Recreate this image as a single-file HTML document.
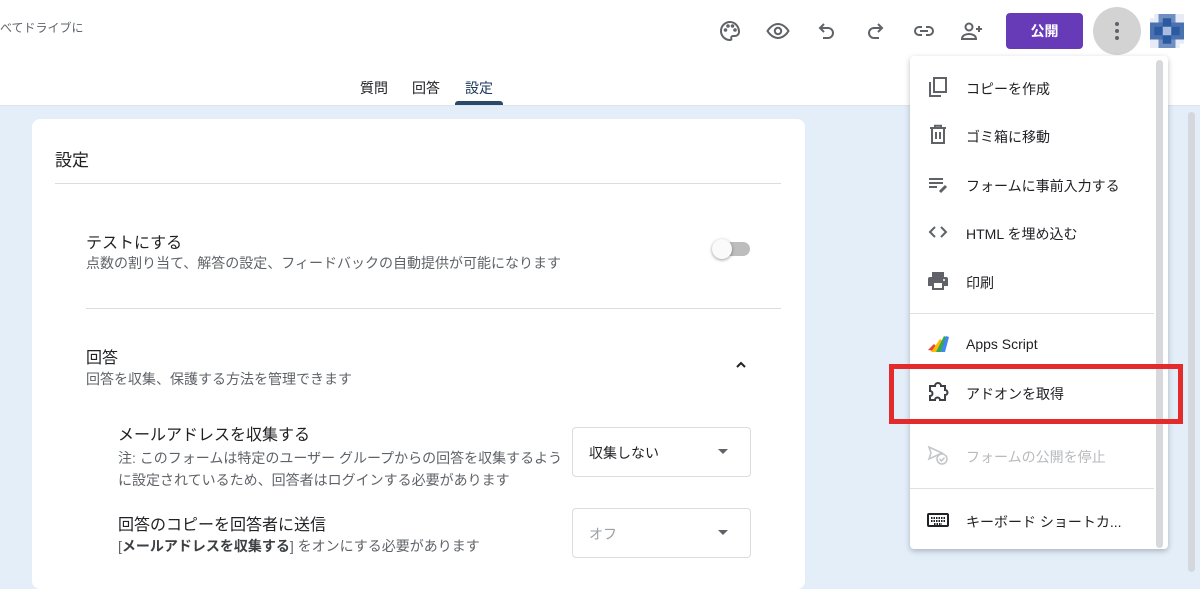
<!DOCTYPE html>
<html><head><meta charset="utf-8"><style>
*{margin:0;padding:0;box-sizing:border-box}
body{width:1200px;height:569px;overflow:hidden;background:#e3eef9;font-family:"Liberation Sans","Noto Sans CJK JP",sans-serif;position:relative;color:#202124}
.hdr{position:absolute;left:0;top:0;width:1200px;height:106px;background:#fff;border-bottom:1px solid #dde4ec}
.abs{position:absolute}
.ic{position:absolute;width:24px;height:24px}
.tab{position:absolute;top:78px;font-size:14px;color:#202124}
.card{position:absolute;left:32px;top:119px;width:773px;height:470px;background:#fff;border-radius:8px}
.t{position:absolute;white-space:nowrap}
.menu{position:absolute;left:910px;top:56px;width:258px;height:493px;background:#fff;border-radius:4px;box-shadow:0 2px 6px rgba(0,0,0,.25)}
.mi{position:absolute;left:56px;font-size:14px;color:#202124;white-space:nowrap}
.sel{position:absolute;width:179px;height:50px;border:1px solid #dadce0;border-radius:4px;background:#fff}
.arr{position:absolute;left:145px;top:21px;width:0;height:0;border-left:5px solid transparent;border-right:5px solid transparent;border-top:5px solid #5f6368}
</style></head><body>
<div class="hdr"></div>
<div class="t" style="left:0;top:19px;font-size:12px;color:#5f6368">べてドライブに</div>
<svg class="ic" style="left:718px;top:19px" viewBox="0 0 24 24" fill="none" stroke="#5f6368" stroke-width="2"><path d="M12 3a9 9 0 1 0 0 18c1.2 0 1.6-.8 1.3-1.6-.4-1 .2-2.4 1.6-2.4H17a4 4 0 0 0 4-4c0-5.5-4-10-9-10z"/><circle cx="7.5" cy="11" r=".8" fill="#5f6368"/><circle cx="10" cy="7" r=".8" fill="#5f6368"/><circle cx="14.5" cy="7" r=".8" fill="#5f6368"/><circle cx="17" cy="11" r=".8" fill="#5f6368"/></svg>
<svg class="ic" style="left:766px;top:19px" viewBox="0 0 24 24" fill="none" stroke="#5f6368" stroke-width="2"><path d="M1.5 12S5.5 5 12 5s10.5 7 10.5 7-4 7-10.5 7S1.5 12 1.5 12z"/><circle cx="12" cy="12" r="3.2"/></svg>
<svg class="ic" style="left:815px;top:19px" viewBox="0 0 24 24" fill="none" stroke="#5f6368" stroke-width="2"><path d="M9 5L5 9l4 4"/><path d="M5 9h8a5 5 0 0 1 0 10H8"/></svg>
<svg class="ic" style="left:863px;top:19px" viewBox="0 0 24 24" fill="none" stroke="#5f6368" stroke-width="2"><path d="M15 5l4 4-4 4"/><path d="M19 9h-8a5 5 0 0 0 0 10h5"/></svg>
<svg class="ic" style="left:912px;top:19px" viewBox="0 0 24 24" fill="none" stroke="#5f6368" stroke-width="2"><path d="M10 8H7a4 4 0 0 0 0 8h3M14 8h3a4 4 0 0 1 0 8h-3M8 12h8"/></svg>
<svg class="ic" style="left:960px;top:19px" viewBox="0 0 24 24" fill="none" stroke="#5f6368" stroke-width="2"><circle cx="9" cy="8" r="3.5"/><path d="M2 20c0-3.5 3.5-5 7-5s7 1.5 7 5z"/><path d="M19 7v6M16 10h6"/></svg>
<div class="abs" style="left:1006px;top:13px;width:77px;height:36px;background:#673ab7;border-radius:4px;color:#fff;font-size:14px;font-weight:bold;text-align:center;line-height:36px">公開</div>
<div class="abs" style="left:1093px;top:7px;width:48px;height:48px;border-radius:50%;background:#d3d3d3"></div>
<div class="abs" style="left:1115px;top:22px;width:4px;height:4px;border-radius:50%;background:#5f6368"></div>
<div class="abs" style="left:1115px;top:29px;width:4px;height:4px;border-radius:50%;background:#5f6368"></div>
<div class="abs" style="left:1115px;top:36px;width:4px;height:4px;border-radius:50%;background:#5f6368"></div>
<svg class="abs" style="left:1150px;top:13px" width="34" height="36" viewBox="0 0 8 8"><rect width="8" height="8" fill="#e6ebf5"/><rect x="2" y="0" width="4" height="8" fill="#6f8fc2"/><rect x="0" y="2" width="8" height="4" fill="#4b72b0"/><rect x="3" y="1" width="2" height="6" fill="#2c5aa0"/><rect x="1" y="3" width="6" height="2" fill="#2c5aa0"/><rect x="3" y="3" width="2" height="2" fill="#a9bde0"/><rect x="0" y="0" width="1" height="1" fill="#fff"/><rect x="7" y="7" width="1" height="1" fill="#fff"/></svg>
<div class="tab" style="left:360px">質問</div>
<div class="tab" style="left:412px">回答</div>
<div class="tab" style="left:465px;color:#1a3a5a">設定</div>
<div class="abs" style="left:455px;top:101px;width:48px;height:4px;background:#2a4a6a;border-radius:3px 3px 0 0"></div>
<div class="card">
<div class="t" style="left:23px;top:27px;font-size:17px">設定</div>
<div class="abs" style="left:23px;top:64px;width:726px;height:1px;background:#dadce0"></div>
<div class="t" style="left:54px;top:110px;font-size:16px">テストにする</div>
<div class="t" style="left:54px;top:134px;font-size:14px;color:#5f6368">点数の割り当て、解答の設定、フィードバックの自動提供が可能になります</div>
<div class="abs" style="left:684px;top:123px;width:34px;height:14px;border-radius:7px;background:#bdbdbd"></div>
<div class="abs" style="left:680px;top:120px;width:20px;height:20px;border-radius:50%;background:#fafafa;box-shadow:0 1px 3px rgba(0,0,0,.4)"></div>
<div class="abs" style="left:54px;top:189px;width:695px;height:1px;background:#dadce0"></div>
<div class="t" style="left:54px;top:225px;font-size:16px">回答</div>
<div class="t" style="left:54px;top:250px;font-size:14px;color:#5f6368">回答を収集、保護する方法を管理できます</div>
<svg class="abs" style="left:702px;top:239px" width="14" height="14" viewBox="0 0 14 14" fill="none" stroke="#202124" stroke-width="2"><path d="M3 9l4-4 4 4"/></svg>
<div class="t" style="left:86px;top:302px;font-size:16px">メールアドレスを収集する</div>
<div class="t" style="left:86px;top:328px;font-size:14px;color:#5f6368;line-height:22px">注: このフォームは特定のユーザー グループからの回答を収集するよう<br>に設定されているため、回答者はログインする必要があります</div>
<div class="sel" style="left:540px;top:308px"><span class="t" style="left:16px;top:15px;font-size:14px">収集しない</span><span class="arr"></span></div>
<div class="t" style="left:86px;top:392px;font-size:16px">回答のコピーを回答者に送信</div>
<div class="t" style="left:86px;top:417px;font-size:14px;color:#5f6368">[<b style="color:#3c4043">メールアドレスを収集する</b>] をオンにする必要があります</div>
<div class="sel" style="left:540px;top:389px"><span class="t" style="left:16px;top:15px;font-size:14px;color:#9aa0a6">オフ</span><span class="arr"></span></div>
</div>
<div class="abs" style="left:1188px;top:112px;width:7px;height:460px;border-radius:4px;background:#d4d8dd"></div>
<div class="menu">
<div class="abs" style="left:246px;top:4px;width:7px;height:488px;border-radius:4px;background:#d6d8db"></div>
<svg class="ic" style="left:16px;top:19px" viewBox="0 0 24 24" fill="none" stroke="#5f6368" stroke-width="2"><path d="M4 7v14h11"/><rect x="8" y="3" width="12" height="14"/></svg>
<div class="mi" style="top:23px">コピーを作成</div>
<svg class="ic" style="left:16px;top:67px" viewBox="0 0 24 24" fill="none" stroke="#5f6368" stroke-width="2"><path d="M4 5h16M9 4V2.8h6V4"/><path d="M6 5v15h12V5"/><path d="M10 9v7M14 9v7"/></svg>
<div class="mi" style="top:71px">ゴミ箱に移動</div>
<svg class="ic" style="left:16px;top:116px" viewBox="0 0 24 24" fill="none" stroke="#5f6368" stroke-width="2"><path d="M3 7h14M3 11h14M3 15h8"/><path d="M14 20l6-6" stroke-width="3"/></svg>
<div class="mi" style="top:120px">フォームに事前入力する</div>
<svg class="ic" style="left:16px;top:164px" viewBox="0 0 24 24" fill="none" stroke="#5f6368" stroke-width="2"><path d="M9 7l-5 5 5 5M15 7l5 5-5 5"/></svg>
<div class="mi" style="top:168px">HTML を埋め込む</div>
<svg class="ic" style="left:16px;top:213px" viewBox="0 0 24 24"><path fill="#5f6368" d="M6 3h12v5H6zM4 8h16a2 2 0 0 1 2 2v7h-4v4H6v-4H2v-7a2 2 0 0 1 2-2z"/><rect x="8" y="14" width="8" height="5" fill="#fff"/><circle cx="18" cy="11" r="1" fill="#fff"/></svg>
<div class="mi" style="top:217px">印刷</div>
<div class="abs" style="left:0;top:257px;width:244px;height:1px;background:#e0e0e0"></div>
<svg class="ic" style="left:16px;top:276px" viewBox="0 0 24 24"><path d="M2 18l6-6 3 3-3 4z" fill="#ea4335"/><path d="M5 20l9-13 3 2-7 11z" fill="#fbbc04"/><path d="M10 20l8-16 3 1.5-6 14.5z" fill="#34a853"/><path d="M15 20l5-16 3 1-4 15z" fill="#4285f4"/></svg>
<div class="mi" style="top:280px">Apps Script</div>
<svg class="ic" style="left:16px;top:324px" viewBox="0 0 24 24" fill="none" stroke="#3c4043" stroke-width="2"><path d="M4 6h5a3 3 0 0 1 6 0h4v4a2.5 2.5 0 0 1 0 5v5h-5a2.5 2.5 0 0 0-5 0H4v-4a2.5 2.5 0 0 0 0-5z"/></svg>
<div class="mi" style="top:328px">アドオンを取得</div>
<svg class="ic" style="left:16px;top:387px" viewBox="0 0 24 24" fill="none" stroke="#c4c7c9" stroke-width="1.6"><path d="M3 4l13 6-13 6 2-6z"/><circle cx="16" cy="16" r="5" fill="#fff"/><path d="M13.5 16l2 2 3-3.5"/></svg>
<div class="mi" style="top:391px;color:#b8babd">フォームの公開を停止</div>
<div class="abs" style="left:0;top:432px;width:244px;height:1px;background:#e0e0e0"></div>
<svg class="ic" style="left:16px;top:452px" viewBox="0 0 24 24" fill="none" stroke="#202124" stroke-width="2"><rect x="2" y="6" width="20" height="12" rx="1"/><path d="M5 10h14M5 13h14M8 16h8" stroke-dasharray="1.5 1"/></svg>
<div class="mi" style="top:456px">キーボード ショートカ...</div>
</div>
<div class="abs" style="left:889px;top:364px;width:294px;height:60px;border:5px solid #e32b2b"></div>
</body></html>
